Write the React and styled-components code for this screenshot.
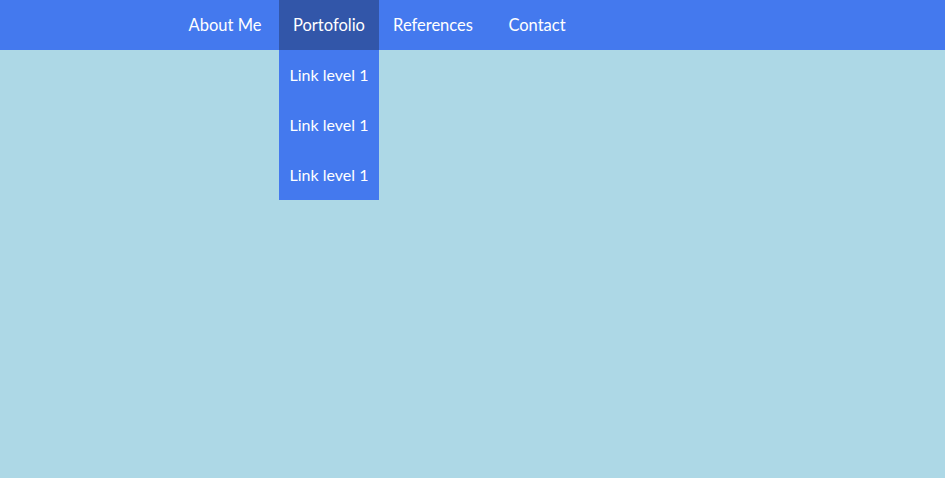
import React from "react";
import styled, { createGlobalStyle } from "styled-components";

const Global = createGlobalStyle`
  html, body { margin: 0; padding: 0; }
  body {
    background: #add8e6;
    font-family: "Lato", "Open Sans", sans-serif;
    min-height: 478px;
  }
`;

const Nav = styled.nav`
  height: 50px;
  background: #4479ee;
`;

const Menu = styled.ul`
  list-style: none;
  margin: 0;
  padding: 0 0 0 175px;
  display: flex;
  gap: 4px;
  height: 100%;
`;

const Item = styled.li`
  position: relative;
  width: 100px;
  height: 50px;
  box-sizing: border-box;
  padding-bottom: 1px;
  display: flex;
  align-items: center;
  justify-content: center;
  background: ${(p) => (p.$active ? "#3256a9" : "transparent")};
`;

const Link = styled.a`
  color: #ffffff;
  font-size: 16.5px;
  font-weight: 400;
  text-decoration: none;
  white-space: nowrap;
`;

const Dropdown = styled.ul`
  position: absolute;
  top: 50px;
  left: 0;
  width: 100px;
  margin: 0;
  padding: 0;
  list-style: none;
  background: #4479ee;
`;

const SubItem = styled.li`
  height: 50px;
  box-sizing: border-box;
  padding-bottom: 1px;
  display: flex;
  align-items: center;
  justify-content: center;
`;

const SubLink = styled.a`
  color: #ffffff;
  font-size: 16px;
  text-decoration: none;
  white-space: nowrap;
`;

export default function App() {
  return (
    <>
      <Global />
      <Nav>
        <Menu>
          <Item><Link href="#">About Me</Link></Item>
          <Item $active>
            <Link href="#">Portofolio</Link>
            <Dropdown>
              <SubItem><SubLink href="#">Link level 1</SubLink></SubItem>
              <SubItem><SubLink href="#">Link level 1</SubLink></SubItem>
              <SubItem><SubLink href="#">Link level 1</SubLink></SubItem>
            </Dropdown>
          </Item>
          <Item><Link href="#">References</Link></Item>
          <Item><Link href="#">Contact</Link></Item>
        </Menu>
      </Nav>
    </>
  );
}
